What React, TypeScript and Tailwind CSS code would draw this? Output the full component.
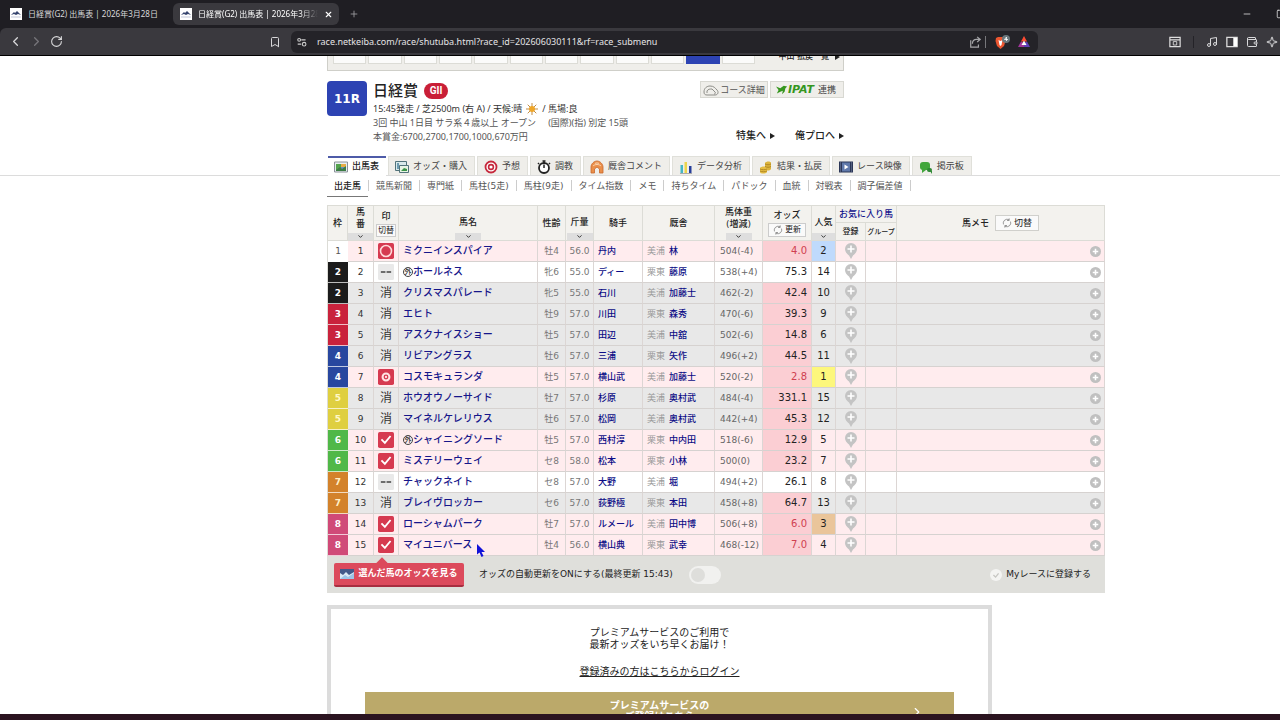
import type { ReactNode } from "react";
import { Bookmark, ChevronDown, ChevronLeft, ChevronRight, Minus, Music, Plus, RotateCw, Sparkle, Square, Wallet, X } from "lucide-react";

// ============================================================
// Race card data
// ============================================================

type Mark = "circle" | "double" | "check" | "none" | "out";

interface Horse {
  frame: number;
  mark: Mark;
  name: string;
  foreign?: boolean;
  sexAge: string;
  weight: string;
  jockey: string;
  base: string;
  trainer: string;
  body: string;
  odds: string;
  rank: number;
}

const HORSES: Horse[] = [
  { frame: 1, mark: "circle", name: "ミクニインスパイア", sexAge: "牡4", weight: "56.0", jockey: "丹内", base: "美浦", trainer: "林", body: "504(-4)", odds: "4.0", rank: 2 },
  { frame: 2, mark: "none", name: "ホールネス", foreign: true, sexAge: "牝6", weight: "55.0", jockey: "ディー", base: "栗東", trainer: "藤原", body: "538(+4)", odds: "75.3", rank: 14 },
  { frame: 2, mark: "out", name: "クリスマスパレード", sexAge: "牝5", weight: "55.0", jockey: "石川", base: "美浦", trainer: "加藤士", body: "462(-2)", odds: "42.4", rank: 10 },
  { frame: 3, mark: "out", name: "エヒト", sexAge: "牡9", weight: "57.0", jockey: "川田", base: "栗東", trainer: "森秀", body: "470(-6)", odds: "39.3", rank: 9 },
  { frame: 3, mark: "out", name: "アスクナイスショー", sexAge: "牡5", weight: "57.0", jockey: "田辺", base: "美浦", trainer: "中舘", body: "502(-6)", odds: "14.8", rank: 6 },
  { frame: 4, mark: "out", name: "リビアングラス", sexAge: "牡6", weight: "57.0", jockey: "三浦", base: "栗東", trainer: "矢作", body: "496(+2)", odds: "44.5", rank: 11 },
  { frame: 4, mark: "double", name: "コスモキュランダ", sexAge: "牡5", weight: "57.0", jockey: "横山武", base: "美浦", trainer: "加藤士", body: "520(-2)", odds: "2.8", rank: 1 },
  { frame: 5, mark: "out", name: "ホウオウノーサイド", sexAge: "牡7", weight: "57.0", jockey: "杉原", base: "美浦", trainer: "奥村武", body: "484(-4)", odds: "331.1", rank: 15 },
  { frame: 5, mark: "out", name: "マイネルケレリウス", sexAge: "牡6", weight: "57.0", jockey: "松岡", base: "美浦", trainer: "奥村武", body: "442(+4)", odds: "45.3", rank: 12 },
  { frame: 6, mark: "check", name: "シャイニングソード", foreign: true, sexAge: "牡5", weight: "57.0", jockey: "西村淳", base: "栗東", trainer: "中内田", body: "518(-6)", odds: "12.9", rank: 5 },
  { frame: 6, mark: "check", name: "ミステリーウェイ", sexAge: "セ8", weight: "58.0", jockey: "松本", base: "栗東", trainer: "小林", body: "500(0)", odds: "23.2", rank: 7 },
  { frame: 7, mark: "none", name: "チャックネイト", sexAge: "セ8", weight: "57.0", jockey: "大野", base: "美浦", trainer: "堀", body: "494(+2)", odds: "26.1", rank: 8 },
  { frame: 7, mark: "out", name: "ブレイヴロッカー", sexAge: "セ6", weight: "57.0", jockey: "荻野極", base: "栗東", trainer: "本田", body: "458(+8)", odds: "64.7", rank: 13 },
  { frame: 8, mark: "check", name: "ローシャムパーク", sexAge: "牡7", weight: "57.0", jockey: "ルメール", base: "美浦", trainer: "田中博", body: "506(+8)", odds: "6.0", rank: 3 },
  { frame: 8, mark: "check", name: "マイユニバース", sexAge: "牡4", weight: "56.0", jockey: "横山典", base: "栗東", trainer: "武幸", body: "468(-12)", odds: "7.0", rank: 4 },
];

const FRAME_COLORS: Record<number, string> = {
  1: "bg-white text-[#555] font-normal",
  2: "bg-[#1b1b1b] text-white font-bold",
  3: "bg-[#c9223c] text-white font-bold",
  4: "bg-[#28479f] text-white font-bold",
  5: "bg-[#dfcf40] text-[#fff9c8] font-bold",
  6: "bg-[#50b848] text-white font-bold",
  7: "bg-[#d3822b] text-[#fff0c8] font-bold",
  8: "bg-[#d04a78] text-white font-bold",
};

const RANK_COLORS: Record<number, string> = {
  1: "bg-[#fdf77c]",
  2: "bg-[#bfdafc]",
  3: "bg-[#eac59a]",
};

const ROW_COLORS: Record<Mark, string> = {
  circle: "bg-[#ffecee]",
  double: "bg-[#ffecee]",
  check: "bg-[#ffecee]",
  none: "bg-white",
  out: "bg-[#e8e8e8]",
};

const SUB_NAV = ["競馬新聞", "専門紙", "馬柱(5走)", "馬柱(9走)", "タイム指数", "メモ", "持ちタイム", "パドック", "血統", "対戦表", "調子偏差値"];

// ============================================================
// Icons
// ============================================================

function Svg({ children, className = "h-3.5 w-3.5" }: { children: ReactNode; className?: string }) {
  return (
    <svg viewBox="0 0 14 14" className={`${className} shrink-0`} fill="none" aria-hidden="true">
      {children}
    </svg>
  );
}

const TABS: { label: string; icon: ReactNode }[] = [
  {
    label: "出馬表",
    icon: (
      <Svg>
        <path d="M.5 2h13v10H.5z" fill="#e8eef0" stroke="#8a9299" />
        <path d="M2 4h5v6H2z" fill="#53a34c" />
        <path d="M7 4h5v3H7z" fill="#e7ad45" />
        <path d="M7 7h5v3H7z" fill="#5f92c9" />
        <path d="M2 10l4-3 2 2 4-3v5H2z" fill="#3c7c45" />
      </Svg>
    ),
  },
  {
    label: "オッズ・購入",
    icon: (
      <Svg>
        <path d="M.5 1.500h11v9H.5z" fill="#d9e9ea" stroke="#52737a" />
        <path d="M2 3h2v6H2z" fill="#6e9bb0" />
        <path d="M4.500 5.500h9v7h-9z" fill="#e8f4e4" stroke="#52737a" />
        <path d="M6 11l3-3 3 1v2z" fill="#3b9447" />
      </Svg>
    ),
  },
  {
    label: "予想",
    icon: (
      <Svg>
        <circle cx="7" cy="7" r="5.500" fill="#fff" stroke="#c6283c" strokeWidth="1.800" />
        <circle cx="7" cy="7" r="2.400" fill="#fff" stroke="#c6283c" strokeWidth="1.600" />
      </Svg>
    ),
  },
  {
    label: "調教",
    icon: (
      <Svg>
        <circle cx="7" cy="8" r="5" fill="#fff" stroke="#222" strokeWidth="1.800" />
        <path d="M7 8V4.500M5.500 1h3M7 1v2M2 3l-1 1M12 3l1 1" stroke="#222" strokeWidth="1.500" />
      </Svg>
    ),
  },
  {
    label: "厩舎コメント",
    icon: (
      <Svg>
        <path d="M1 13V7c0-3 3-6 6-6s6 3 6 6v6H9.500V9L7 7 4.500 9v4z" fill="#ea8f4a" stroke="#c9672b" strokeWidth=".8" />
        <path d="M3 6c2-2 6-2 8 0M5 3.500c1-.7 3-.7 4 0" stroke="#fbd3ad" />
      </Svg>
    ),
  },
  {
    label: "データ分析",
    icon: (
      <Svg>
        <path d="M1.500 5H4v8H1.500z" fill="#45b6c5" />
        <path d="M5.500 2H8v11H5.500z" fill="#ecd54c" />
        <path d="M10 6h2.500v7H10z" fill="#263e9a" />
        <path d="M1 13.500h12" stroke="#aaa" />
      </Svg>
    ),
  },
  {
    label: "結果・払戻",
    icon: (
      <Svg>
        <path d="M6 3c1-2 6-2 6 0v6c-1 2-6 2-6 0z" fill="#dcb43c" />
        <path d="M1 8c1-2 7-2 7 0v4c-1 2-7 2-7 0z" fill="#e5bd43" />
        <path d="M6 4c2 1 4 1 6 0M6 6.500c2 1 4 1 6 0M1 9c2 1 5 1 7 0M1 11c2 1 5 1 7 0" stroke="#a57b1d" strokeWidth=".8" />
      </Svg>
    ),
  },
  {
    label: "レース映像",
    icon: (
      <Svg>
        <path d="M0 1.500h14v11H0z" fill="#2b3657" />
        <path d="M3 2.500h8v9H3z" fill="#5f78aa" />
        <path d="M5.500 4.500L9.500 7l-4 2.500z" fill="#fff" />
        <path d="M1.500 2.500v9M12.500 2.500v9" stroke="#7c89a8" strokeDasharray="1 1" />
      </Svg>
    ),
  },
  {
    label: "掲示板",
    icon: (
      <Svg>
        <rect x="1" y="2" width="10" height="8" rx="3" fill="#42a63c" />
        <path d="M3 9v4l4-3z" fill="#42a63c" />
        <rect x="8" y="8" width="5" height="4" rx="2" fill="#2f8a35" />
        <path d="M11 11l2 3v-3z" fill="#2f8a35" />
      </Svg>
    ),
  },
];

function MarkIcon({ mark }: { mark: Mark }) {
  if (mark === "out") return <span className="text-[12px]">消</span>;
  if (mark === "none") {
    return (
      <Svg className="h-4 w-4">
        <rect width="14" height="14" rx="1" fill="#e9e9e9" />
        <path d="M2.500 7h4M7.500 7h4" stroke="#444" strokeWidth="1.200" />
      </Svg>
    );
  }
  return (
    <Svg className="h-4 w-4">
      <rect width="14" height="14" rx="1.500" fill="#d63a50" />
      {mark === "circle" && <circle cx="7" cy="7" r="4.800" stroke="#ffd9d9" strokeWidth="1.400" />}
      {mark === "double" && (
        <>
          <circle cx="7" cy="7" r="3" stroke="#ffe4e4" strokeWidth="1.800" />
          <circle cx="7" cy="7" r="1" fill="#ffe4e4" />
        </>
      )}
      {mark === "check" && <path d="M3 6.500l3 3 5-6" stroke="#fff" strokeWidth="1.600" />}
    </Svg>
  );
}

function Pin() {
  return (
    <svg viewBox="0 0 12 16" className="h-4 w-3" aria-hidden="true">
      <path d="M6 0a6 6 0 0 0-6 6c0 3 2 5 4 6.500L6 16l2-3.500C10 11 12 9 12 6a6 6 0 0 0-6-6z" fill="#c4c4c4" />
      <path d="M6 2.500v7M2.500 6h7" stroke="#fff" strokeWidth="1.600" />
    </svg>
  );
}

function Favicon() {
  return (
    <svg viewBox="0 0 12 12" className="h-3 w-3 shrink-0" aria-hidden="true">
      <path d="M0 0h12v12H0z" fill="#fff" />
      <path d="M1 7l3-3 1 1 2-2 2 2 2 2-3-1-2 1-2-1z" fill="#37456f" />
      <path d="M1 9h10" stroke="#c5c9da" />
    </svg>
  );
}

function Reload() {
  return (
    <Svg className="h-2.5 w-2.5">
      <path d="M2 9a5.500 5.500 0 0 1 8-6.500M12 5a5.500 5.500 0 0 1-8 6.500M10 .5v3H7M4 13.500v-3h3" stroke="#777" />
    </Svg>
  );
}

function Arrow() {
  return (
    <svg viewBox="0 0 5 6" className="h-1.5 w-[5px]" aria-hidden="true">
      <path d="M0 0l5 3-5 3z" fill="#222" />
    </svg>
  );
}

// ============================================================
// Browser frame
// ============================================================

function Browser() {
  return (
    <header className="shrink-0 bg-[#1f1e23] font-['Noto_Sans','Noto_Sans_CJK_JP',sans-serif] text-[#d8d8da]">
      <div className="flex h-7 items-center">
        <button className="flex h-[22px] w-[173px] items-center gap-1.5 overflow-hidden pr-3 pl-2.5 text-[8px] whitespace-nowrap">
          <Favicon />
          <span>日経賞(G2) 出馬表 | 2026年3月28日</span>
        </button>
        <div className="flex h-[22px] w-[166px] items-center gap-1.5 rounded-md bg-[#3a393e] pr-1.5 pl-[7px] text-[8px] text-white">
          <Favicon />
          <button className="min-w-0 flex-1 overflow-hidden mask-r-from-85% text-left whitespace-nowrap">日経賞(G2) 出馬表 | 2026年3月28日</button>
          <button aria-label="閉じる">
            <X size={9} strokeWidth={3} />
          </button>
        </div>
        <button aria-label="新しいタブ" className="ml-2.5 text-[#a0a0a4]">
          <Plus size={10} />
        </button>
        <div className="ml-auto flex items-center gap-6 overflow-hidden">
          <Minus size={10} />
          <Square size={10} className="-mr-1.5" />
        </div>
      </div>

      <div className="flex h-7 items-center rounded-tl-md border-b border-black bg-[#3a393e]">
        <div className="flex w-[291px] shrink-0 items-center gap-1.5 pr-2.5 pl-2">
          <ChevronLeft size={15} />
          <ChevronRight size={15} className="text-[#77767b]" />
          <RotateCw size={13} />
          <Bookmark size={12} className="ml-auto" />
        </div>
        <div className="flex h-[22px] w-[747px] items-center rounded-md bg-[#242328] pr-2 pl-1.5">
          <Svg className="h-2.5 w-2.5">
            <circle cx="3" cy="4" r="2" stroke="#ccc" strokeWidth="1.500" />
            <circle cx="10" cy="10" r="2.500" stroke="#ccc" strokeWidth="1.500" />
            <path d="M6 4h6M1 10h5" stroke="#ccc" strokeWidth="1.500" />
          </Svg>
          <input
            aria-label="アドレス"
            className="mx-2.5 min-w-0 flex-1 bg-transparent text-[9px] text-[#e4e4e6] outline-none"
            defaultValue="race.netkeiba.com/race/shutuba.html?race_id=202606030111&rf=race_submenu"
          />
          <Svg className="h-3 w-3">
            <path d="M2 5v8h9v-3M4 9c0-3 2-5 5-5h3M9.500 1l3.500 3-3.500 3" stroke="#a5a5a8" strokeWidth="1.400" />
          </Svg>
          <span className="mx-1 h-3 w-px bg-[#77777b]" />
          <svg viewBox="0 0 16 14" className="ml-1 h-3.5 w-4" aria-hidden="true">
            <path d="M2 3l2-1h5l2 1 .5 3L10 11l-3.500 3L3 11 1.500 6z" fill="#ec5630" />
            <path d="M4.500 5l2 1 2-1-1 5-1 1-1-1z" fill="#fff" />
            <circle cx="12" cy="4" r="4" fill="#69777c" />
            <path d="M12.500 6V2l-2 2.500H14" stroke="#fff" fill="none" strokeWidth=".8" />
          </svg>
          <svg viewBox="0 0 12 11" className="ml-2 h-[11px] w-3" aria-hidden="true">
            <path d="M6 0l3 5.500H3z" fill="#ff4b32" />
            <path d="M3 5.500L0 11h6l0-4z" fill="#a1359b" />
            <path d="M9 5.500L12 11H6V7z" fill="#5f3fb8" />
            <path d="M6 4.500L8.500 9h-5z" fill="#fff" />
          </svg>
        </div>
        <div className="mr-0.5 ml-auto flex items-center gap-2 overflow-hidden">
          <Svg className="h-3 w-3">
            <path d="M1 1.500h12v11H1zM1 4.500h12" stroke="#ddd" strokeWidth="1.400" />
            <path d="M5 6.500h4v4H5z" stroke="#ddd" />
          </Svg>
          <span className="mx-1 h-3 w-px bg-[#242328]" />
          <Music size={12} />
          <Svg className="h-3 w-3">
            <path d="M1 1.500h12v11H1z" stroke="#ddd" strokeWidth="1.500" />
            <path d="M8.500 2H13v10H8.500z" fill="#fff" />
          </Svg>
          <Wallet size={12} />
          <Sparkle size={12} />
        </div>
      </div>
    </header>
  );
}

// ============================================================
// Race heading
// ============================================================

function RaceHead() {
  return (
    <>
      <div className="flex h-[15px] max-w-[517px] items-end justify-between overflow-hidden border-x border-b border-[#cfcfc9] bg-[#efeeea] pl-[5px] text-[8px] leading-[10px] font-medium text-[#222]">
        <div className="mb-1.5 grid h-5 w-[422px] grid-cols-12 gap-0.5">
          {Array.from({ length: 12 }, (_, i) => (
            <a key={i} href="#race" aria-label={`${i + 1}R`} className={i === 10 ? "bg-[#2d43b3]" : "border border-[#dcdcd6] bg-[#fbfbfa]"} />
          ))}
        </div>
        <a href="#pay" className="flex items-center gap-1.5 pr-[3px] pb-2">
          中山 払戻一覧 <Arrow />
        </a>
      </div>

      <div className="flex h-[85px] max-w-[517px] items-start pt-2.5">
        <div className="flex h-[35px] w-10 shrink-0 items-center justify-center rounded-sm bg-[#2d43b3] text-[12px] font-bold text-white">11R</div>
        <div className="ml-1.5 flex-1 font-['Noto_Sans','Noto_Sans_CJK_JP',sans-serif] text-[9px] leading-[14px] whitespace-nowrap text-[#555]">
          <h1 className="mb-0.5 flex items-center gap-1.5 text-[15px] leading-[19px] font-medium text-[#222]">
            日経賞
            <span className="flex h-4 w-6 items-center justify-center rounded-full bg-[#c91f37] font-['Roboto',sans-serif] text-[10px] font-bold text-white">GII</span>
          </h1>
          <p className="flex items-center gap-1 text-[#333]">
            15:45発走 / 芝2500m (右 A) / 天候:晴
            <Svg className="h-3 w-3">
              <path d="M7 0v14M0 7h14M2 2l10 10M12 2L2 12" stroke="#b77a27" />
              <circle cx="7" cy="7" r="3.500" fill="#efa628" />
            </Svg>
            / 馬場:良
          </p>
          <p>
            3回 中山 1日目 サラ系４歳以上 オープン<span className="ml-3">(国際)(指) 別定 15頭</span>
          </p>
          <p>本賞金:6700,2700,1700,1000,670万円</p>
        </div>
        <div className="flex flex-col items-end text-[9px] leading-[10px] whitespace-nowrap">
          <div className="flex gap-0.5">
            <a href="#course" className="flex h-[17px] items-center gap-px border border-[#d8d8d2] bg-[#efeeea] px-0.5 text-[#555]">
              <svg viewBox="0 0 16 12" className="h-3 w-4" fill="none" stroke="#8d8d88" aria-hidden="true">
                <path d="M1 8c0-4 3-6 6-6 4 0 5 2 7 4 2 2 1 5-2 5H4c-2 0-3-1-3-3z" />
                <path d="M4 9V7c1-2 3-2 5-2l3 3c1 1 0 2-1 2" />
              </svg>
              コース詳細
            </a>
            <a href="#ipat" className="flex h-[17px] items-center gap-1 border border-[#d8d8d2] bg-[#efeeea] pr-[7px] pl-[5px] text-[#444]">
              <span className="flex items-center text-[11px] font-bold text-[#35961e] italic">
                <Svg className="h-3 w-3">
                  <path d="M0 3l5 2 4-3 4 1-2 2-1 4-3 3 1-4-3 1-4 2 2-4z" fill="#35961e" />
                </Svg>
                IPAT
              </span>
              連携
            </a>
          </div>
          <div className="mt-[33px] flex gap-5 text-[10px] font-medium text-[#222]">
            <a href="#feature" className="flex items-center gap-1">特集へ <Arrow /></a>
            <a href="#orepro" className="flex items-center gap-1">俺プロへ <Arrow /></a>
          </div>
        </div>
      </div>
    </>
  );
}

// ============================================================
// Race card table
// ============================================================

const TH = "border-r border-b border-[#dcdcd6] p-0 text-center font-medium";
const TD = "h-[21px] border-r border-b border-r-[#dcd6d4] border-b-[#d6d2d0] p-0";

function SortHead({ label, sub }: { label: string; sub?: string }) {
  return (
    <div className="flex h-[34px] flex-col items-center">
      <div className={sub ? "flex-1" : "flex flex-1 items-center pt-1"}>
        {label}
        {sub && <div>{sub}</div>}
      </div>
      <button aria-label={`${label}で並べ替え`} className="flex h-[7px] w-full max-w-[26px] items-center justify-center bg-[#dedede]">
        <ChevronDown size={7} strokeWidth={3} />
      </button>
    </div>
  );
}

function RaceTable() {
  return (
    <table className="w-full table-fixed border-separate border-spacing-0 border-t border-l border-[#dcdcd6] text-[9px] leading-3 text-[#333]">
      <colgroup>
        <col className="w-[20px]" />
        <col className="w-[26px]" />
        <col className="w-[25px]" />
        <col className="w-[139px]" />
        <col className="w-[28px]" />
        <col className="w-[28px]" />
        <col className="w-[49px]" />
        <col className="w-[72px]" />
        <col className="w-[48px]" />
        <col className="w-[49px]" />
        <col className="w-[24px]" />
        <col className="w-[30px]" />
        <col className="w-[31px]" />
        <col />
      </colgroup>
      <thead className="bg-[#f3f2ee] text-[#222]">
        <tr>
          <th rowSpan={2} className={TH}>枠</th>
          <th rowSpan={2} className={TH}><SortHead label="馬" sub="番" /></th>
          <th rowSpan={2} className={TH}>
            印
            <button className="mx-auto mt-0.5 block h-[13px] border border-[#ccc] bg-[#fafafa] px-px text-[8px] leading-[11px] font-normal">切替</button>
          </th>
          <th rowSpan={2} className={TH}><SortHead label="馬名" /></th>
          <th rowSpan={2} className={TH}>性齢</th>
          <th rowSpan={2} className={TH}><SortHead label="斤量" /></th>
          <th rowSpan={2} className={TH}>騎手</th>
          <th rowSpan={2} className={TH}>厩舎</th>
          <th rowSpan={2} className={TH}><SortHead label="馬体重" sub="(増減)" /></th>
          <th rowSpan={2} className={TH}>
            オッズ
            <button className="mx-auto mt-0.5 flex h-3.5 items-center gap-0.5 border border-[#ccc] bg-[#fafafa] px-1 text-[8px] font-normal">
              <Reload />
              更新
            </button>
          </th>
          <th rowSpan={2} className={TH}><SortHead label="人気" /></th>
          <th colSpan={2} className={`${TH} h-[17px]`}>
            <a href="#favorite" className="text-[#12128c]">お気に入り馬</a>
          </th>
          <th rowSpan={2} className={TH}>
            <div className="flex items-center justify-center gap-1.5">
              馬メモ
              <button className="flex h-4 items-center gap-0.5 border border-[#d0d0cc] bg-[#fafafa] px-1.5 font-normal">
                <Reload />
                切替
              </button>
            </div>
          </th>
        </tr>
        <tr>
          <th className={`${TH} h-[18px] text-[8px]`}>登録</th>
          <th className={`${TH} h-[18px] text-[7px] whitespace-nowrap`}>グループ</th>
        </tr>
      </thead>
      <tbody>
        {HORSES.map((h, i) => (
          <tr key={h.name} className={ROW_COLORS[h.mark]}>
            <td className={`h-[21px] border-b border-white/70 p-0 text-center ${FRAME_COLORS[h.frame]}`}>{h.frame}</td>
            <td className={`${TD} text-center`}>{i + 1}</td>
            <td className={TD}>
              <button aria-label="印" className="flex w-full items-center justify-center">
                <MarkIcon mark={h.mark} />
              </button>
            </td>
            <td className={`${TD} pl-1 text-[10px] font-medium whitespace-nowrap text-[#16168a]`}>
              <div className="flex items-center">
                {h.foreign && (
                  <span className="flex h-2.5 w-2.5 items-center justify-center rounded-full border border-[#444] text-[7px] leading-none text-[#333]">外</span>
                )}
                <a href="#horse">{h.name}</a>
              </div>
            </td>
            <td className={`${TD} text-center text-[#777]`}>{h.sexAge}</td>
            <td className={`${TD} text-center text-[#777]`}>{h.weight}</td>
            <td className={`${TD} pl-1 font-medium whitespace-nowrap text-[#0c0c86]`}>
              <a href="#jockey">{h.jockey}</a>
            </td>
            <td className={`${TD} pl-1 whitespace-nowrap`}>
              <span className="mr-1 text-[#999]">{h.base}</span>
              <a href="#trainer" className="font-medium text-[#0c0c86]">{h.trainer}</a>
            </td>
            <td className={`${TD} pl-[5px] whitespace-nowrap text-[#666]`}>{h.body}</td>
            <td
              className={`${TD} pr-1 text-right text-[10px] ${h.mark === "none" ? "" : "bg-[#fbced3]"} ${
                Number(h.odds) < 10 ? "text-[#cf4050]" : "text-[#222]"
              }`}
            >
              {h.odds}
            </td>
            <td className={`${TD} text-center text-[10px] text-[#222] ${RANK_COLORS[h.rank] ?? ""}`}>{h.rank}</td>
            <td className={TD}>
              <button aria-label="お気に入り登録" className="flex w-full justify-center">
                <Pin />
              </button>
            </td>
            <td className={TD} />
            <td className={TD}>
              <button aria-label="メモを追加" className="mr-[3px] ml-auto block">
                <Svg className="h-[11px] w-[11px]">
                  <circle cx="7" cy="7" r="7" fill="#c0c0c0" />
                  <path d="M7 3.500v7M3.500 7h7" stroke="#fff" strokeWidth="2" />
                </Svg>
              </button>
            </td>
          </tr>
        ))}
      </tbody>
    </table>
  );
}

function TableFooter() {
  return (
    <div className="flex h-[37px] items-center bg-[#dfdfdb] pr-3.5 pl-[7px] text-[9px] whitespace-nowrap text-[#222]">
      <div className="relative">
        <span className="absolute -top-1 left-11 h-2 w-2 rotate-45 bg-[#dc4a5c]" />
        <button className="relative flex h-6 w-[130px] items-center justify-center gap-1 rounded-xs border-b-2 border-[#a72e40] bg-[#dc4a5c] font-bold text-white">
          <Svg>
            <path d="M0 2h14v10H0z" fill="#dbe8f5" />
            <path d="M0 2h14v3L9 8 6 5 3 8 0 6z" fill="#44598a" />
            <path d="M0 12l5-4 3 2 6-4v6z" fill="#9ec4e8" />
          </Svg>
          選んだ馬のオッズを見る
        </button>
      </div>
      <label className="ml-[15px] flex items-center gap-4">
        オッズの自動更新をONにする(最終更新 15:43)
        <input
          type="checkbox"
          role="switch"
          className="h-[18px] w-8 appearance-none rounded-full bg-[#f1f1ef] p-0.5 before:block before:h-3.5 before:w-3.5 before:rounded-full before:bg-[#dededb]"
        />
      </label>
      <button className="ml-auto flex items-center gap-1">
        <Svg className="h-3 w-3">
          <circle cx="7" cy="7" r="7" fill="#f4f4f2" />
          <path d="M4 7l2.500 2.500L10 5" stroke="#c6c6c2" strokeWidth="1.500" />
        </Svg>
        Myレースに登録する
      </button>
    </div>
  );
}

// ============================================================
// Page
// ============================================================

export default function App() {
  return (
    <div className="flex h-screen flex-col overflow-hidden bg-white font-['DejaVu_Sans','Noto_Sans_CJK_JP',sans-serif]">
      <Browser />
      <main className="min-h-0 flex-1 overflow-hidden">
        <div className="ml-[327px]">
          <RaceHead />
        </div>

        <nav className="flex h-5 gap-0.5 border-b border-[#dcdcdc] pl-[328px] text-[9px] whitespace-nowrap text-[#444]">
          {TABS.map((tab, i) => (
            <a
              key={tab.label}
              href="#tab"
              className={
                i === 0
                  ? "flex h-5 items-center gap-1 border-t-2 border-[#4e5ba8] bg-white pr-[7px] pl-1.5 font-medium text-[#222]"
                  : "flex items-center gap-1 border-x border-t border-[#e0e0da] bg-[#efeeea] pt-0.5 pr-[7px] pl-1.5"
              }
            >
              {tab.icon}
              {tab.label}
            </a>
          ))}
        </nav>

        <div className="ml-[327px] max-w-[778px]">
          <nav className="flex h-[21px] text-[9px] leading-[10px] whitespace-nowrap text-[#555]">
            <a href="#entries" className="flex items-center border-b border-[#777] px-[7px] font-medium text-[#222]">出走馬</a>
            {SUB_NAV.map((item) => (
              <a key={item} href="#sub" className="mt-1 mb-1.5 flex items-center border-l border-[#ccc] px-[7px]">
                {item}
              </a>
            ))}
            <span className="mt-1 mb-1.5 border-l border-[#ccc]" />
          </nav>

          <div className="relative mt-2">
            <RaceTable />
            <TableFooter />
            {/* Mouse pointer */}
            <svg viewBox="0 0 8 13" className="absolute top-[339px] left-[150px] h-[13px] w-2" aria-hidden="true">
              <path d="M0 0v10.500l2.500-2L4.500 13l2-1-2-4H8z" fill="#1212d8" />
            </svg>
          </div>

          <section className="mt-3 max-w-[665px] border-4 border-[#dcdcdc] px-[34px] pt-[18px] text-center text-[10px] leading-3 text-[#222]">
            <p>
              プレミアムサービスのご利用で
              <br />
              最新オッズをいち早くお届け！
            </p>
            <a href="#login" className="mt-[15px] inline-block underline">登録済みの方はこちらからログイン</a>
            <a href="#premium" className="mt-3.5 grid h-10 grid-cols-[1fr_auto_1fr] items-center bg-[#bba96a] leading-[11px] font-bold text-white">
              <span />
              <span className="self-start pt-2">
                プレミアムサービスの
                <br />
                ご登録はこちら
              </span>
              <ChevronRight size={14} className="mr-[30px] justify-self-end" />
            </a>
          </section>
        </div>
      </main>
      <div className="h-1.5 shrink-0 bg-[#2b1420]" />
    </div>
  );
}
